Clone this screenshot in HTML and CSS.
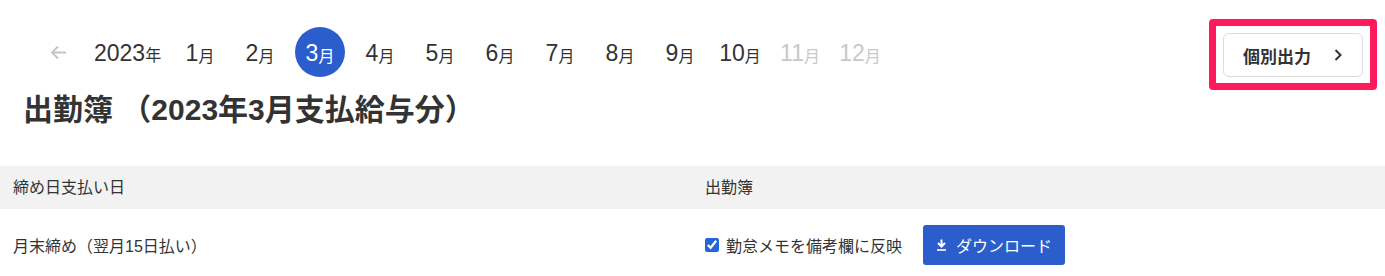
FILE: index.html
```html
<!DOCTYPE html>
<html lang="ja">
<head>
<meta charset="utf-8">
<link rel="stylesheet" href="styles.css">
</head>
<body>
<div class="page">
  <div class="top">
    <div class="left">
      <nav class="months">
        <span class="arrow">
          <svg width="17" height="15" viewBox="0 0 17 15"><path d="M16 7.5H2M8 1.5L2 7.5l6 6" fill="none" stroke="#c4c4c4" stroke-width="1.8"/></svg>
        </span>
        <span class="year">2023<small>年</small></span>
        <div class="list">
          <span class="m">1<small>月</small></span>
          <span class="m">2<small>月</small></span>
          <span class="m active">3<small>月</small></span>
          <span class="m">4<small>月</small></span>
          <span class="m">5<small>月</small></span>
          <span class="m">6<small>月</small></span>
          <span class="m">7<small>月</small></span>
          <span class="m">8<small>月</small></span>
          <span class="m">9<small>月</small></span>
          <span class="m">10<small>月</small></span>
          <span class="m disabled">11<small>月</small></span>
          <span class="m disabled">12<small>月</small></span>
        </div>
      </nav>
      <h1 class="title">出勤簿 （2023年3月支払給与分）</h1>
    </div>
    <div class="export-wrap">
      <button class="export">個別出力
        <svg width="10" height="14" viewBox="0 0 10 14"><path d="M2.5 2l5 5-5 5" fill="none" stroke="#333" stroke-width="2"/></svg>
      </button>
      <span class="highlight"></span>
    </div>
  </div>
  <div class="table">
    <div class="th">締め日支払い日</div>
    <div class="th">出勤簿</div>
    <div class="td">月末締め（翌月15日払い）</div>
    <div class="td actions">
      <label class="check"><input type="checkbox" checked> 勤怠メモを備考欄に反映</label>
      <button class="dl">
        <svg width="11" height="12" viewBox="0 0 11 12"><path d="M5.5 0.5v6.5M2 4l3.5 3.5L9 4" fill="none" stroke="#fff" stroke-width="2"/><path d="M1 11h9" stroke="#fff" stroke-width="1.6"/></svg>
        ダウンロード
      </button>
    </div>
  </div>
</div>
</body>
</html>
```
FILE: styles.css
```css
* { box-sizing: border-box; }
body {
  margin: 0;
  font-family: "Liberation Sans", "Noto Sans CJK JP", sans-serif;
  color: #333;
  background: #fff;
}
.top {
  display: flex;
  justify-content: space-between;
  align-items: flex-start;
  padding: 27px 22px 0 23px;
}
.months {
  display: flex;
  align-items: center;
  height: 50px;
  padding-left: 27px;
}
.arrow {
  display: flex;
  width: 17px;
  margin-right: 27px;
}
.year {
  font-size: 23px;
  width: 81px;
  color: #333;
  padding-top: 2px;
}
.year small, .m small {
  font-size: 16px;
}
.list {
  display: flex;
  gap: 10px;
}
.m {
  width: 50px;
  height: 50px;
  border-radius: 50%;
  display: flex;
  align-items: center;
  justify-content: center;
  font-size: 23px;
  color: #333;
  padding-top: 2px;
}
.m small { margin-top: 3px; }
.m.active {
  background: #2b5dcd;
  color: #fff;
}
.m.disabled { color: #c8c8c8; }
.title {
  margin: 14px 0 0 0;
  font-size: 30px;
  line-height: 38px;
  font-weight: bold;
  color: #333;
}
.export-wrap {
  position: relative;
  margin-top: 6px;
}
.export {
  width: 140px;
  height: 44px;
  border: 1px solid #dcdcdc;
  border-radius: 6px;
  background: #fff;
  font-family: inherit;
  font-size: 17px;
  font-weight: bold;
  color: #333;
  display: flex;
  align-items: center;
  justify-content: center;
  gap: 22px;
  padding: 0;
}
.highlight {
  position: absolute;
  left: -14px;
  top: -14px;
  right: -14px;
  bottom: -13px;
  border: 7px solid #ff1a5c;
  border-radius: 4px;
  pointer-events: none;
}
.table {
  margin-top: 37px;
  display: grid;
  grid-template-columns: 692px 1fr;
}
.th {
  background: #f2f2f2;
  height: 43px;
  line-height: 43px;
  padding: 0 13px;
  font-size: 16px;
  color: #333;
}
.td {
  padding: 16px 13px;
  font-size: 16px;
  color: #333;
  display: flex;
  align-items: center;
  min-height: 72px;
}
.actions { gap: 21px; }
.check {
  display: flex;
  align-items: center;
  gap: 7px;
  font-size: 16px;
}
.check input {
  margin: 0;
  width: 14px;
  height: 14px;
  accent-color: #2566d6;
}
.dl {
  width: 142px;
  height: 40px;
  background: #2b5dcd;
  color: #fff;
  border: none;
  border-radius: 3px;
  font-family: inherit;
  font-size: 16px;
  display: flex;
  align-items: center;
  justify-content: center;
  gap: 9px;
}
```
